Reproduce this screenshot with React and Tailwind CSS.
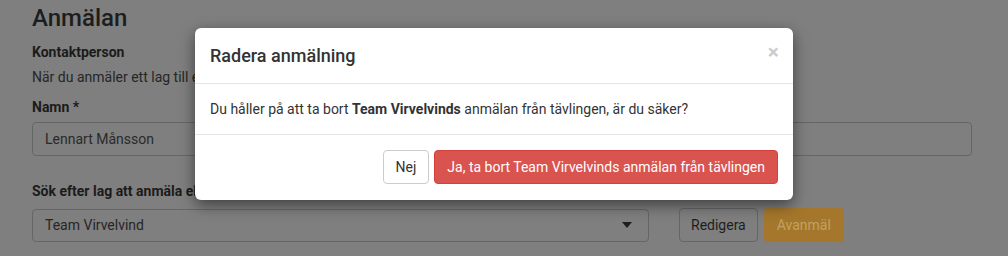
export default function App() {
  return (
    <div
      className="relative w-[1008px] h-[256px] overflow-hidden bg-[#7f7f7f] text-[#1b1b1b]"
      style={{ fontFamily: "Roboto, 'Liberation Sans', sans-serif" }}
    >
      <div className="pl-[32px] pr-[36px]">
        <h1 className="text-[24px] leading-[26px] font-medium mt-[5px] text-[#1d1d1d]">Anmälan</h1>
        <div className="text-[14px] leading-[20px] font-bold mt-[11px]">Kontaktperson</div>
        <p className="text-[14px] leading-[20px] mt-[5px] text-[#262626]">
          När du anmäler ett lag till en tävling blir du kontaktperson för laget.
        </p>
        <div className="text-[14px] leading-[20px] font-bold mt-[10px]">Namn *</div>
        <div className="mt-[5px] h-[34px] w-[940px] border border-[#666] rounded-[4px] flex items-center px-[12px] text-[14px] text-[#2a2a2a]">
          Lennart Månsson
        </div>
        <div className="text-[14px] leading-[20px] font-bold mt-[25px]">Sök efter lag att anmäla eller skriv namn</div>
        <div className="mt-[7px] flex items-center">
          <div className="h-[33px] w-[617px] border border-[#666] rounded-[4px] flex items-center justify-between pl-[12px] pr-[16px] text-[14px] text-[#262626]">
            <span>Team Virvelvind</span>
            <svg width="10" height="6" viewBox="0 0 10 6"><path d="M0 0h10L5 6z" fill="#1e1e1e" /></svg>
          </div>
          <div className="ml-[30px] h-[34px] px-[11px] border border-[#666] rounded-[4px] flex items-center text-[14px] text-[#1e1e1e]">
            Redigera
          </div>
          <div className="ml-[6px] h-[34px] w-[80px] rounded-[4px] flex items-center justify-center bg-[#a5772c] text-[14px] text-[#c4a062]">
            Avanmäl
          </div>
        </div>
      </div>

      <div className="absolute left-[195px] top-[28px] w-[598px] bg-white rounded-[6px] shadow-[0_5px_15px_rgba(0,0,0,0.5)] text-[#333]">
        <div className="flex items-center justify-between px-[15px] h-[56px] border-b border-[#e5e5e5]">
          <h4 className="text-[18px] leading-[26px] font-medium">Radera anmälning</h4>
          <span className="text-[21px] font-bold leading-none text-[#000] opacity-20 -mt-[6px] -mr-[1px]">×</span>
        </div>
        <div className="p-[15px] text-[14px] leading-[20px]">
          Du håller på att ta bort <b>Team Virvelvinds</b> anmälan från tävlingen, är du säker?
        </div>
        <div className="flex justify-end gap-[5px] px-[15px] pt-[15px] pb-[16px] border-t border-[#e5e5e5]">
          <button className="h-[34px] px-[12px] border border-[#ccc] rounded-[4px] bg-white text-[14px] text-[#333]">Nej</button>
          <button className="h-[34px] px-[12px] border border-[#d43f3a] rounded-[4px] bg-[#d9534f] text-[14px] text-white">
            Ja, ta bort Team Virvelvinds anmälan från tävlingen
          </button>
        </div>
      </div>
    </div>
  );
}
